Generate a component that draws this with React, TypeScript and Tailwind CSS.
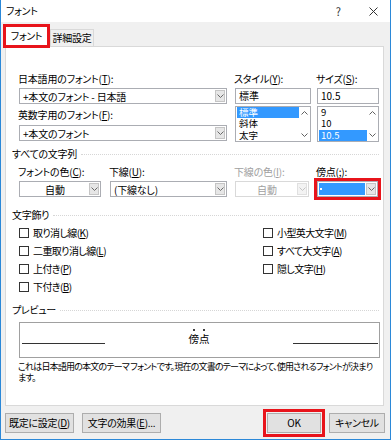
import React from "react";

function Chevron({ color = "#606060", up = false }: { color?: string; up?: boolean }) {
  return (
    <svg width="7" height="4" viewBox="0 0 7 4" className="block">
      <path
        d={up ? "M0.5 3.5 L3.5 0.5 L6.5 3.5" : "M0.5 0.5 L3.5 3.5 L6.5 0.5"}
        fill="none"
        stroke={color}
        strokeWidth="1"
      />
    </svg>
  );
}

function U({ c }: { c: string }) {
  return <span className="underline underline-offset-[1px] decoration-1">{c}</span>;
}

function DropBtn({ disabled }: { disabled?: boolean }) {
  return (
    <div
      className={
        disabled
          ? "w-[10px] h-full border border-[#e0e0e0] bg-[#f3f3f3] flex items-center justify-center"
          : "w-[10px] h-full border border-[#c5c5c5] bg-[#e6e6e6] flex items-center justify-center"
      }
    >
      <Chevron color={disabled ? "#c4c4c4" : "#6a6a6a"} />
    </div>
  );
}

function Label({ children, disabled }: { children: React.ReactNode; disabled?: boolean }) {
  return (
    <div
      className={
        disabled
          ? "h-[14px] leading-[14px] -ml-px text-[#a0a0a0] whitespace-nowrap tracking-[-0.2px]"
          : "h-[14px] leading-[14px] -ml-px whitespace-nowrap tracking-[-0.2px]"
      }
    >
      {children}
    </div>
  );
}

function EditCombo({ text, w }: { text: string; w: string }) {
  return (
    <div className={`${w} h-[16px] border border-[#abadb3] bg-white flex items-center p-px`}>
      <div className="flex-1 pl-[2px] leading-[13px] whitespace-nowrap tracking-[-0.2px]">{text}</div>
      <DropBtn />
    </div>
  );
}

function ListBox({ items, sel, w }: { items: string[]; sel: number; w: string }) {
  return (
    <div className={`${w} h-[36px] border border-[#abadb3] bg-white flex`}>
      <div className="flex-1 flex flex-col pl-px">
        {items.map((it, i) => (
          <div
            key={i}
            className={
              i === sel
                ? "h-[11.3px] flex items-center pl-[2px] bg-[#3399ff] text-white"
                : "h-[11.3px] flex items-center pl-[2px]"
            }
          >
            <span className="text-[9.5px] leading-[11px]">{it}</span>
          </div>
        ))}
      </div>
      <div className="w-[11px] flex flex-col justify-between items-center py-[4px]">
        <Chevron up />
        <Chevron />
      </div>
    </div>
  );
}

function SectionHeader({ title }: { title: string }) {
  return (
    <div className="h-[14px] flex items-center gap-[4px]">
      <span className="leading-[14px] whitespace-nowrap tracking-[-0.3px]">{title}</span>
      <div className="flex-1 border-t border-dotted border-[#d6d6d6]" />
    </div>
  );
}

function Check({ children }: { children: React.ReactNode }) {
  return (
    <div className="h-[18px] flex items-center gap-[4px]">
      <div className="w-[10px] h-[10px] border border-[#333333] bg-white" />
      <span className="leading-[14px] whitespace-nowrap tracking-[-0.6px]">{children}</span>
    </div>
  );
}

function Btn({ children, w, extra = "" }: { children: React.ReactNode; w: string; extra?: string }) {
  return (
    <div
      className={`${w} h-[20px] bg-[#e1e1e1] border border-[#adadad] flex items-center justify-center leading-[14px] whitespace-nowrap tracking-[-0.3px] ${extra}`}
    >
      {children}
    </div>
  );
}

export default function App() {
  return (
    <div className="w-[391px] h-[440px] flex flex-col bg-[#f0f0f0] border-x border-b border-[#2b88d8] text-[10px] text-black font-['Noto_Sans_CJK_JP','Noto_Sans',sans-serif] [font-feature-settings:'palt'] overflow-hidden">
      {/* Title bar */}
      <div className="h-[22px] bg-white flex items-center pl-[5px] pr-[12px] shrink-0">
        <span className="leading-[14px] tracking-[-0.3px]">フォント</span>
        <span className="ml-auto text-[11px] leading-[14px] text-[#333]">?</span>
        <svg width="9" height="9" viewBox="0 0 9 9" className="ml-[28px]">
          <path d="M0.5 0.5 L8.5 8.5 M8.5 0.5 L0.5 8.5" stroke="#333" strokeWidth="1" />
        </svg>
      </div>

      {/* Tabs */}
      <div className="h-[26px] -mb-[2px] flex items-end pl-[2px] shrink-0">
        <div className="relative z-10 w-[47px] h-[24px] border-[3px] border-[#e8141b] bg-white flex items-center justify-center leading-[14px] tracking-[-0.3px]">
          フォント
        </div>
        <div className="w-[44px] h-[17px] mb-[2px] border border-b-0 border-[#d9d9d9] bg-[#f0f0f0] flex items-center justify-center leading-[14px] tracking-[-0.3px]">
          詳細設定
        </div>
      </div>

      {/* Panel */}
      <div className="ml-[4px] w-[379px] h-[360px] shrink-0 bg-white border border-[#d9d9d9] pt-[25px] pl-[6px] pr-[4px] flex flex-col">
        {/* Block 1 */}
        <div className="h-[70px] flex pl-[7px]">
          <div className="w-[208px] flex flex-col">
            <Label>
              日本語用のフォント(<U c="T" />):
            </Label>
            <div className="mt-[2px]">
              <EditCombo text="+本文のフォント - 日本語" w="w-[208px]" />
            </div>
            <div className="mt-[4px]">
              <Label>
                英数字用のフォント(<U c="F" />):
              </Label>
            </div>
            <div className="mt-[3px]">
              <EditCombo text="+本文のフォント" w="w-[208px]" />
            </div>
          </div>
          <div className="ml-[8px] w-[76px] flex flex-col">
            <Label>
              スタイル(<U c="Y" />):
            </Label>
            <div className="mt-[2px] h-[16px] border border-[#abadb3] bg-white pl-[3px] leading-[14px]">標準</div>
            <div className="mt-[2px]">
              <ListBox items={["標準", "斜体", "太字"]} sel={0} w="w-[76px]" />
            </div>
          </div>
          <div className="ml-[6px] w-[62px] flex flex-col">
            <Label>
              サイズ(<U c="S" />):
            </Label>
            <div className="mt-[2px] h-[16px] border border-[#abadb3] bg-white pl-[3px] leading-[14px]">10.5</div>
            <div className="mt-[2px]">
              <ListBox items={["9", "10", "10.5"]} sel={2} w="w-[62px]" />
            </div>
          </div>
        </div>

        {/* すべての文字列 */}
        <div className="mt-[5px]">
          <SectionHeader title="すべての文字列" />
        </div>
        <div className="mt-[4px] flex pl-[7px]">
          <div className="w-[82px] flex flex-col">
            <Label>
              フォントの色(<U c="C" />):
            </Label>
            <div className="mt-[2px] h-[16px] border border-[#abadb3] bg-white flex items-center p-px">
              <div className="flex-1 text-center leading-[13px]">自動</div>
              <DropBtn />
            </div>
          </div>
          <div className="ml-[9px] w-[117px] flex flex-col">
            <Label>
              下線(<U c="U" />):
            </Label>
            <div className="mt-[2px] h-[16px] border border-[#abadb3] bg-white flex items-center p-px">
              <div className="flex-1 pl-[2px] leading-[13px] tracking-[-0.2px]">(下線なし)</div>
              <DropBtn />
            </div>
          </div>
          <div className="ml-[8px] w-[74px] flex flex-col">
            <Label disabled>
              下線の色(<U c="I" />):
            </Label>
            <div className="mt-[2px] h-[16px] border border-[#d9d9d9] bg-white flex items-center p-px text-[#a0a0a0]">
              <div className="flex-1 text-center leading-[13px]">自動</div>
              <DropBtn disabled />
            </div>
          </div>
          <div className="ml-[8px] w-[61px] flex flex-col">
            <Label>傍点(;):</Label>
            <div className="mt-[2px] h-[16px] border border-[#abadb3] bg-white flex p-px outline-[3px] outline-solid outline-[#e8141b]">
              <div className="flex-1 mr-px bg-[#3399ff] text-white pl-[1px] leading-[12px] flex items-center">
                <div className="w-[2px] h-[2px] bg-white" />
              </div>
              <DropBtn />
            </div>
          </div>
        </div>

        {/* 文字飾り */}
        <div className="mt-[11px]">
          <SectionHeader title="文字飾り" />
        </div>
        <div className="mt-[2px] flex pl-[7px]">
          <div className="w-[244px] flex flex-col">
            <Check>
              取り消し線(<U c="K" />)
            </Check>
            <Check>
              二重取り消し線(<U c="L" />)
            </Check>
            <Check>
              上付き(<U c="P" />)
            </Check>
            <Check>
              下付き(<U c="B" />)
            </Check>
          </div>
          <div className="flex flex-col">
            <Check>
              小型英大文字(<U c="M" />)
            </Check>
            <Check>
              すべて大文字(<U c="A" />)
            </Check>
            <Check>
              隠し文字(<U c="H" />)
            </Check>
          </div>
        </div>

        {/* プレビュー */}
        <div className="mt-[7px]">
          <SectionHeader title="プレビュー" />
        </div>
        <div className="mt-[5px] ml-[7px] w-[361px] h-[36px] border border-[#a0a0a0] bg-white flex items-start">
          <div className="ml-[2px] w-[83px] mt-[20px] border-t border-[#333]" />
          <div className="flex-1 flex justify-center pt-[6px]">
            <div className="flex">
              <div className="flex flex-col items-center">
                <div className="w-[2px] h-[2px] rounded-full bg-black" />
                <span className="text-[10.5px] leading-[14px] mt-px">傍</span>
              </div>
              <div className="flex flex-col items-center">
                <div className="w-[2px] h-[2px] rounded-full bg-black" />
                <span className="text-[10.5px] leading-[14px] mt-px">点</span>
              </div>
            </div>
          </div>
          <div className="mr-[1px] w-[85px] mt-[20px] border-t border-[#333]" />
        </div>
        <div className="mt-[3px] ml-[6px] text-[9px] leading-[11px] tracking-[-0.8px] whitespace-nowrap">
          これは日本語用の本文のテーマ フォントです。現在の文書のテーマによって、使用されるフォントが決まり
          <br />
          ます。
        </div>
      </div>

      {/* Buttons */}
      <div className="mt-[7px] flex pl-[4px] pr-[5px]">
        <Btn w="w-[69px]">
          既定に設定(<U c="D" />)
        </Btn>
        <Btn w="w-[79px]" extra="ml-[8px]">
          文字の効果(<U c="E" />)...
        </Btn>
        <Btn
          w="w-[54px]"
          extra="ml-auto border-[#0078d7] outline-[3px] outline-solid outline-offset-[1px] outline-[#e8141b]"
        >
          OK
        </Btn>
        <Btn w="w-[56px]" extra="ml-[8px]">
          キャンセル
        </Btn>
      </div>
    </div>
  );
}
